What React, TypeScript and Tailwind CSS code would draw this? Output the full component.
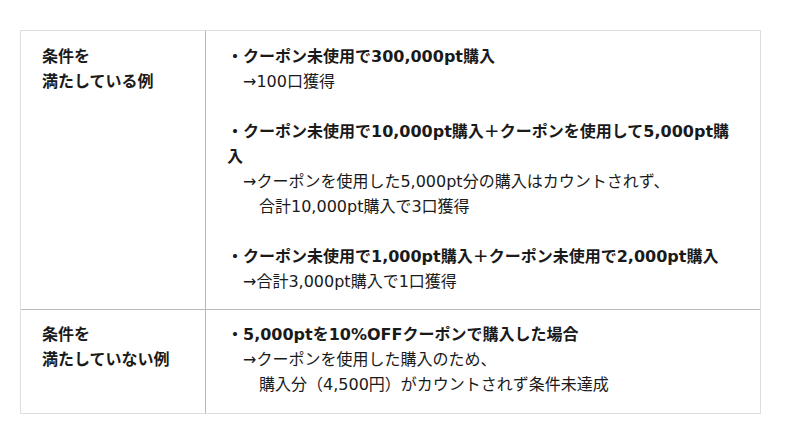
import React from 'react';

const font = { fontFamily: '"DejaVu Sans", "Noto Sans CJK JP", sans-serif' };

const Blank = () => <div className="h-[25px]"></div>;

export default function App() {
  return (
    <div className="w-[800px] h-[444px] bg-white pt-[30px] pl-[20px]" style={font}>
      <div className="w-[741px] border border-[#dedede] text-[16px] leading-[25px] text-[#1a1a1a]">
        {/* row 1 */}
        <div className="flex border-b border-[#b8b8b8]">
          <div className="w-[185px] shrink-0 border-r border-[#b8b8b8] pl-[21px] pt-[13px] pb-[15px] font-bold">
            条件を<br />満たしている例
          </div>
          <div className="flex-1 pl-[21px] pr-[27px] pt-[13px] pb-[15px]">
            <div className="font-bold">・クーポン未使用で300,000pt購入</div>
            <div>　→100口獲得</div>
            <Blank />
            <div className="font-bold">・クーポン未使用で10,000pt購入＋クーポンを使用して5,000pt購入</div>
            <div>　→クーポンを使用した5,000pt分の購入はカウントされず、</div>
            <div>　　合計10,000pt購入で3口獲得</div>
            <Blank />
            <div className="font-bold">・クーポン未使用で1,000pt購入＋クーポン未使用で2,000pt購入</div>
            <div>　→合計3,000pt購入で1口獲得</div>
          </div>
        </div>
        {/* row 2 */}
        <div className="flex">
          <div className="w-[185px] shrink-0 border-r border-[#b8b8b8] pl-[21px] pt-[12px] pb-[16px] font-bold">
            条件を<br />満たしていない例
          </div>
          <div className="flex-1 pl-[21px] pr-[27px] pt-[12px] pb-[16px]">
            <div className="font-bold">・5,000ptを10%OFFクーポンで購入した場合</div>
            <div>　→クーポンを使用した購入のため、</div>
            <div>　　購入分（4,500円）がカウントされず条件未達成</div>
          </div>
        </div>
      </div>
    </div>
  );
}
